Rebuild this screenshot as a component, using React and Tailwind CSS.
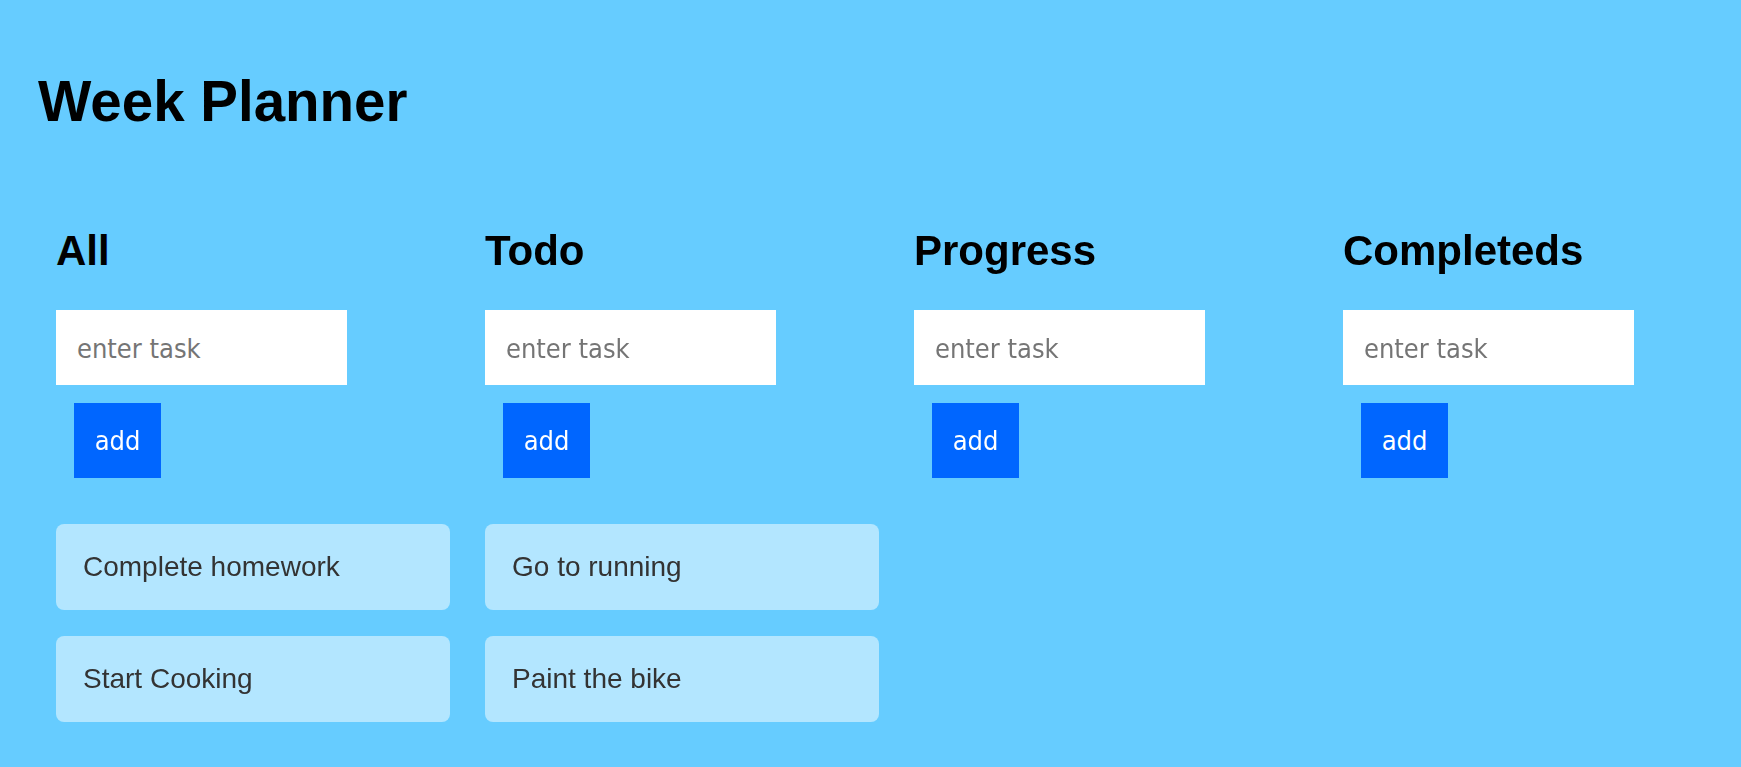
import React from "react";

const columns = [
  { title: "All", tasks: ["Complete homework", "Start Cooking"], focus: true },
  { title: "Todo", tasks: ["Go to running", "Paint the bike"] },
  { title: "Progress", tasks: [] },
  { title: "Completeds", tasks: [] },
];

function Column({ title, tasks, focus }) {
  return (
    <div className="w-[394px] shrink-0 flex flex-col items-start">
      <h2 className="text-[42px] leading-none font-bold text-black">{title}</h2>
      <input
        autoFocus={focus}
        type="text"
        placeholder="enter task"
        className="mt-[38px] w-[291px] h-[75px] bg-white pl-[21px] pt-[2px] text-[27px] text-black outline-none font-['DejaVu_Sans_Condensed',Tahoma,sans-serif] placeholder:text-[#757575]"
      />
      <button className="mt-[18px] ml-[18px] w-[87px] h-[75px] pt-[2px] bg-[#0066ff] text-white text-[27px] font-['DejaVu_Sans_Condensed',Tahoma,sans-serif] flex items-center justify-center">
        add
      </button>
      {tasks.length > 0 && (
        <div className="mt-[46px] w-full flex flex-col gap-[26px]">
          {tasks.map((t) => (
            <div
              key={t}
              className="h-[86px] w-full rounded-lg bg-[#b3e6ff] pl-[27px] flex items-center text-[28px] text-[#333333]"
            >
              {t}
            </div>
          ))}
        </div>
      )}
    </div>
  );
}

export default function App() {
  return (
    <div className="min-h-[767px] bg-[#66ccff] font-['Liberation_Sans',Arial,sans-serif] overflow-hidden">
      <h1 className="pt-[74px] pl-[38px] text-[56.5px] leading-none font-bold text-black">
        Week Planner
      </h1>
      <div className="mt-[99px] pl-[56px] flex gap-[35px]">
        {columns.map((c) => (
          <Column key={c.title} {...c} />
        ))}
      </div>
    </div>
  );
}
